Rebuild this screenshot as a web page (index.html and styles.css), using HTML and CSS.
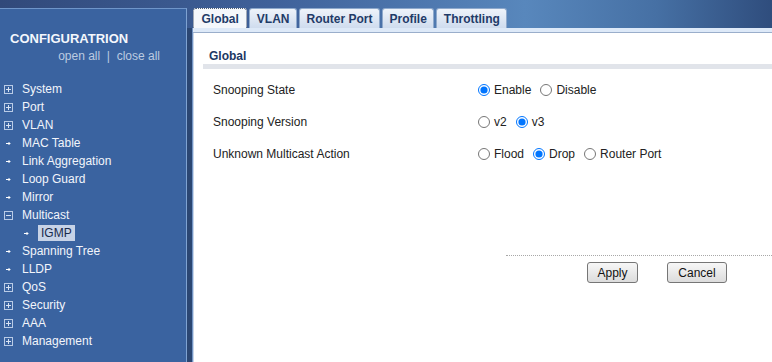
FILE: index.html
```html
<!DOCTYPE html>
<html lang="en">
<head>
    <meta charset="UTF-8">
    <title>IGMP - Global</title>
    <link rel="stylesheet" href="styles.css">
</head>
<body>
    <div class="page">
        <div class="sidebar">
            <div class="side-title">CONFIGURATRION</div>
            <div class="side-links">open all &nbsp;|&nbsp; close all</div>

            <ul class="menu">
                <li><span class="ico"><svg width="9" height="9"><rect x=".5" y=".5" width="8" height="8" fill="none" stroke="#b9cbe6"/><path d="M2 4.5h5M4.5 2v5" stroke="#d8e2f2"/></svg></span>System</li>
                <li><span class="ico"><svg width="9" height="9"><rect x=".5" y=".5" width="8" height="8" fill="none" stroke="#b9cbe6"/><path d="M2 4.5h5M4.5 2v5" stroke="#d8e2f2"/></svg></span>Port</li>
                <li><span class="ico"><svg width="9" height="9"><rect x=".5" y=".5" width="8" height="8" fill="none" stroke="#b9cbe6"/><path d="M2 4.5h5M4.5 2v5" stroke="#d8e2f2"/></svg></span>VLAN</li>
                <li><span class="ico"><svg width="9" height="9"><path d="M2 4.5h4M4.5 3l1.5 1.5-1.5 1.5" stroke="#fff" fill="none"/></svg></span>MAC Table</li>
                <li><span class="ico"><svg width="9" height="9"><path d="M2 4.5h4M4.5 3l1.5 1.5-1.5 1.5" stroke="#fff" fill="none"/></svg></span>Link Aggregation</li>
                <li><span class="ico"><svg width="9" height="9"><path d="M2 4.5h4M4.5 3l1.5 1.5-1.5 1.5" stroke="#fff" fill="none"/></svg></span>Loop Guard</li>
                <li><span class="ico"><svg width="9" height="9"><path d="M2 4.5h4M4.5 3l1.5 1.5-1.5 1.5" stroke="#fff" fill="none"/></svg></span>Mirror</li>
                <li><span class="ico"><svg width="9" height="9"><rect x=".5" y=".5" width="8" height="8" fill="none" stroke="#b9cbe6"/><path d="M2 4.5h5" stroke="#d8e2f2"/></svg></span>Multicast</li>
                <li class="sub"><span class="ico"><svg width="9" height="9"><path d="M2 4.5h4M4.5 3l1.5 1.5-1.5 1.5" stroke="#fff" fill="none"/></svg></span><span class="current">IGMP</span></li>
                <li><span class="ico"><svg width="9" height="9"><path d="M2 4.5h4M4.5 3l1.5 1.5-1.5 1.5" stroke="#fff" fill="none"/></svg></span>Spanning Tree</li>
                <li><span class="ico"><svg width="9" height="9"><path d="M2 4.5h4M4.5 3l1.5 1.5-1.5 1.5" stroke="#fff" fill="none"/></svg></span>LLDP</li>
                <li><span class="ico"><svg width="9" height="9"><rect x=".5" y=".5" width="8" height="8" fill="none" stroke="#b9cbe6"/><path d="M2 4.5h5M4.5 2v5" stroke="#d8e2f2"/></svg></span>QoS</li>
                <li><span class="ico"><svg width="9" height="9"><rect x=".5" y=".5" width="8" height="8" fill="none" stroke="#b9cbe6"/><path d="M2 4.5h5M4.5 2v5" stroke="#d8e2f2"/></svg></span>Security</li>
                <li><span class="ico"><svg width="9" height="9"><rect x=".5" y=".5" width="8" height="8" fill="none" stroke="#b9cbe6"/><path d="M2 4.5h5M4.5 2v5" stroke="#d8e2f2"/></svg></span>AAA</li>
                <li><span class="ico"><svg width="9" height="9"><rect x=".5" y=".5" width="8" height="8" fill="none" stroke="#b9cbe6"/><path d="M2 4.5h5M4.5 2v5" stroke="#d8e2f2"/></svg></span>Management</li>
            </ul>
        </div>

        <div class="divider"></div>

        <div class="main">
            <div class="tabbar">
                <div class="tab active">Global</div>
                <div class="tab">VLAN</div>
                <div class="tab">Router Port</div>
                <div class="tab">Profile</div>
                <div class="tab">Throttling</div>
            </div>
            <div class="tabline"></div>

            <div class="panel">
                <div class="section-title">Global</div>

                <div class="row">
                    <div class="label">Snooping State</div>
                    <div class="opts">
                        <label><input type="radio" name="state" checked>Enable</label>
                        <label><input type="radio" name="state">Disable</label>
                    </div>
                </div>
                <div class="row">
                    <div class="label">Snooping Version</div>
                    <div class="opts">
                        <label><input type="radio" name="ver">v2</label>
                        <label><input type="radio" name="ver" checked>v3</label>
                    </div>
                </div>
                <div class="row">
                    <div class="label">Unknown Multicast Action</div>
                    <div class="opts">
                        <label><input type="radio" name="act">Flood</label>
                        <label><input type="radio" name="act" checked>Drop</label>
                        <label><input type="radio" name="act">Router Port</label>
                    </div>
                </div>

                <div class="footer">
                    <button class="apply">Apply</button>
                    <button class="cancel">Cancel</button>
                </div>
            </div>
        </div>
    </div>
</body>
</html>
```

FILE: styles.css
```css
body {
    margin: 0;
    padding: 0;
    font-family: "Liberation Sans", Arial, sans-serif;
    font-size: 12px;
    background: linear-gradient(90deg, #31497a 0%, #3f619a 35%, #5887bc 68%, #4670a4 85%, #2f4d7d 100%);
    background-size: 100% 28px;
    background-repeat: no-repeat;
    background-color: #2b4674;
}

.page {
    display: flex;
    height: 362px;
    overflow: hidden;
}

.sidebar {
    width: 186px;
    margin-top: 8px;
    background-color: #3a63a0;
    border-top: 1px solid #6f95c9;
    border-right: 1px solid #7ea2d2;
    color: #f2f5fb;
}

.side-title {
    padding: 22px 0 0 10px;
    line-height: 16px;
    font-size: 13px;
    font-weight: bold;
    color: #f4f7fc;
}

.side-links {
    margin-top: 1px;
    padding-right: 26px;
    text-align: right;
    line-height: 16px;
    color: #bccbe1;
}

.menu {
    list-style: none;
    margin: 16px 0 0 0;
    padding: 0;
}

.menu li {
    display: flex;
    align-items: center;
    height: 18px;
    line-height: 18px;
}

.menu .ico {
    display: inline-flex;
    width: 22px;
    padding-left: 4px;
    box-sizing: border-box;
}

.menu .sub {
    padding-left: 18px;
}

.menu .sub .ico {
    width: 20px;
}

.menu .current {
    background-color: #c7d3e7;
    color: #1a2b4c;
    padding: 0 3px;
    line-height: 16px;
}

.divider {
    width: 5px;
    margin-top: 28px;
    background-color: #2b4672;
    border-right: 1px solid #7394c4;
}

.main {
    flex: 1;
    display: flex;
    flex-direction: column;
}

.tabbar {
    height: 28px;
    box-sizing: border-box;
    padding-top: 9px;
    display: flex;
    align-items: flex-end;
    gap: 2px;
}

.tab {
    height: 19px;
    line-height: 20px;
    padding: 0 6.5px;
    font-weight: bold;
    color: #1f3b68;
    background: linear-gradient(#eef3fa, #cfdcee);
    border: 1px solid #8ea9cc;
    border-bottom: none;
    border-radius: 3px 3px 0 0;
}

.tab.active {
    padding: 0 7.5px;
    background: #f4f7fb;
    border: 1px dotted #4d5d74;
    border-bottom: none;
}

.tabline {
    height: 4px;
    background-color: #dde9f8;
    border-bottom: 1px solid #9aaecb;
}

.panel {
    flex: 1;
    background-color: #fff;
    border-left: 1px solid #c9d7ea;
}

.section-title {
    margin: 0 0 0 9px;
    padding: 17px 6px 2px;
    line-height: 12px;
    font-weight: bold;
    color: #1c3863;
    border-bottom: 5px solid #e1e4ea;
}

.row {
    display: flex;
    align-items: center;
    height: 32px;
    padding-left: 19px;
    color: #222;
}

.section-title + .row {
    margin-top: 5px;
}

.label {
    width: 265px;
}

.opts {
    display: flex;
    gap: 9px;
}

.opts label {
    display: flex;
    align-items: center;
}

.opts input {
    width: 12px;
    height: 12px;
    margin: 0 4px 0 0;
}

.footer {
    margin: 85px 0 0 312px;
    border-top: 1px dotted #a8a8a8;
    padding: 6px 0 0 81px;
    display: flex;
    gap: 29px;
}

.footer button {
    height: 21px;
    font-family: "Liberation Sans", Arial, sans-serif;
    font-size: 12px;
    color: #111;
    background: linear-gradient(#f7f7f7, #dcdcdc);
    border: 1px solid #767676;
    border-radius: 3px;
    padding: 0;
}

.footer .apply {
    width: 51px;
}

.footer .cancel {
    width: 60px;
}
```
